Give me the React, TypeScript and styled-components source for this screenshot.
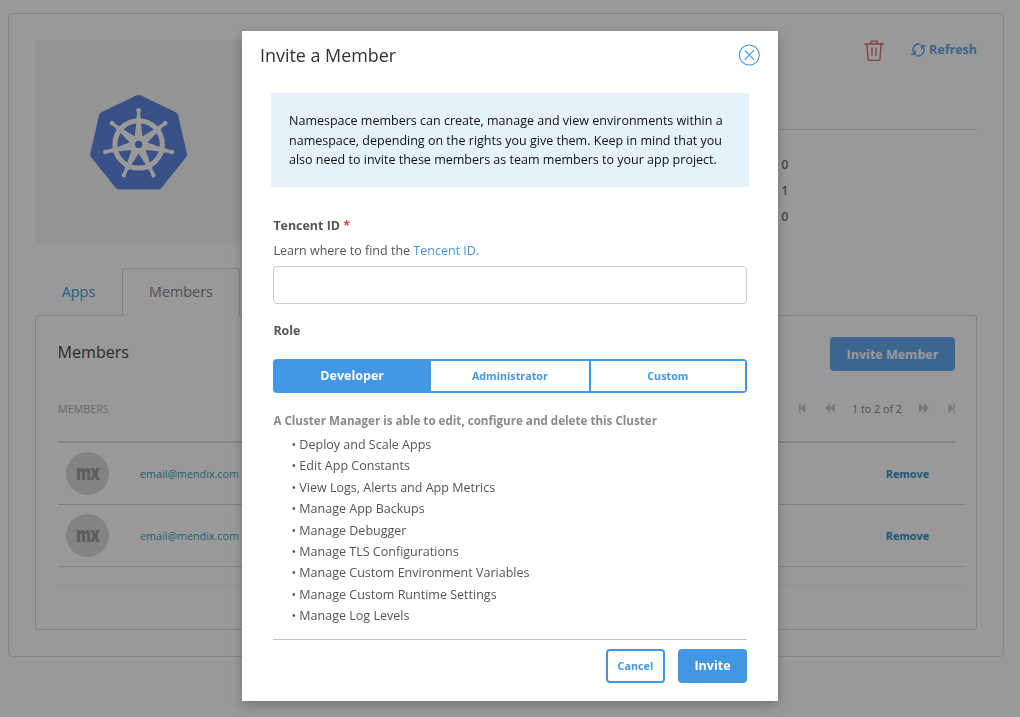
import React from "react";
import styled, { createGlobalStyle } from "styled-components";

const GlobalStyle = createGlobalStyle`
  * { box-sizing: border-box; }
  body {
    margin: 0;
    background: #fff;
    font-family: "Open Sans", "Noto Sans", sans-serif;
    font-size: 12.52px;
    color: #555;
    overflow: hidden;
  }
  button { font-family: inherit; margin: 0; padding: 0; cursor: pointer; }
  p, h1, h2, h3, ul { margin: 0; padding: 0; font-weight: 400; }
`;

const Page = styled.div`
  height: 717px;
  padding: 13px 16px 0 8px;
`;

const ClusterCard = styled.main`
  height: 644px;
  padding: 26px 26px 0 26px;
  border: 1px solid #dedede;
  border-radius: 4px;
`;

const Summary = styled.section`
  display: flex;
  height: 204px;
`;

const LogoTile = styled.div`
  display: flex;
  align-items: center;
  justify-content: center;
  width: 207px;
  background: #f7f7f7;
`;

const Details = styled.div`
  flex: 1;
  margin-left: 24px;
`;

const Actions = styled.div`
  display: flex;
  justify-content: flex-end;
  align-items: flex-start;
  height: 90px;
  border-bottom: 1px solid #d8d8d8;
`;

const TrashButton = styled.button`
  height: 21px;
  margin-right: 27px;
  border: 0;
  background: none;
  color: #e06a6a;
  line-height: 0;
`;

const RefreshButton = styled.button`
  display: flex;
  align-items: center;
  gap: 3px;
  height: 19px;
  border: 0;
  background: none;
  color: #5fa8ee;
  font-size: 12.5px;
  font-weight: 700;
`;

const Stats = styled.div`
  display: flex;
  flex-direction: column;
  align-items: flex-end;
  padding: 22px 188.5px 0 0;
  line-height: 26px;
  font-weight: 600;
  color: #757575;
`;

const Tabs = styled.nav`
  display: flex;
  height: 48px;
  margin-top: 24px;
  position: relative;
`;

const Tab = styled.button<{ $active?: boolean }>`
  width: ${(p) => (p.$active ? 118 : 87)}px;
  padding-bottom: 2px;
  border: 1px solid ${(p) => (p.$active ? "#dadada" : "transparent")};
  border-bottom: 0;
  border-radius: 4px 4px 0 0;
  background: ${(p) => (p.$active ? "#fff" : "none")};
  color: ${(p) => (p.$active ? "#868686" : "#3ba5d6")};
  font-size: 14.35px;
`;

const Panel = styled.section`
  height: 315px;
  margin-top: -1px;
  padding: 21px 11px 0 22px;
  border: 1px solid #dadada;
  border-radius: 3px;
`;

const PanelHead = styled.div`
  display: flex;
  justify-content: space-between;
  padding-right: 10px;
`;

const PanelTitle = styled.h2`
  margin-left: -0.5px;
  line-height: 30px;
  font-size: 16.1px;
  color: #484848;
`;

const InviteMemberButton = styled.button`
  width: 125px;
  height: 34px;
  border: 0;
  border-radius: 4px;
  background: #62abf0;
  color: #fff;
  font-size: 12.5px;
  font-weight: 700;
`;

const TableHead = styled.div`
  display: flex;
  align-items: center;
  justify-content: space-between;
  height: 72px;
  margin-right: 10px;
  padding-top: 5px;
  border-bottom: 2px solid #dcdcdc;
  font-size: 10.75px;
  color: #b0b0b0;
`;

const Pager = styled.div`
  display: flex;
  align-items: center;
  color: #cacaca;
`;

const PagerText = styled.span`
  margin: 1px 17px 0;
  color: #858585;
`;

const Skip = styled.span<{ $before?: number; $after?: number }>`
  margin-left: ${(p) => p.$before ?? 0}px;
  margin-right: ${(p) => p.$after ?? 0}px;
  line-height: 0;
`;

const MemberRow = styled.div`
  display: flex;
  align-items: center;
  height: 62px;
  padding: 0 36px 0 8px;
  border-bottom: 1px solid #d8d8d8;
  font-size: 10.75px;
`;

const Avatar = styled.div`
  display: flex;
  align-items: center;
  justify-content: center;
  width: 43px;
  height: 43px;
  border-radius: 50%;
  background: #dadada;
`;

const AvatarMark = styled.span`
  margin-top: -4px;
  font-size: 21.5px;
  line-height: 23px;
  font-weight: 800;
  letter-spacing: -1px;
  color: #9c9c9c;
  transform: scaleX(0.7);
`;

const Email = styled.a`
  flex: 1;
  margin-left: 31px;
  color: #3ba0cc;
`;

const Remove = styled.a`
  color: #2c93c8;
  font-weight: 700;
`;

const TableFoot = styled.div`
  height: 19px;
  border-bottom: 1px solid #f3f3f3;
`;

const Overlay = styled.div`
  position: fixed;
  inset: 0;
  padding: 31px 242px 0;
  background: rgba(0, 0, 0, 0.4);
`;

const Dialog = styled.div`
  width: 536px;
  height: 669.5px;
  padding: 13px 18px 0;
  background: #fff;
  box-shadow: 0 4px 11px rgba(0, 0, 0, 0.25);
`;

const DialogHead = styled.header`
  display: flex;
  justify-content: space-between;
  align-items: center;
  height: 22px;
`;

const DialogTitle = styled.h1`
  font-size: 17.9px;
  line-height: 22px;
  color: #333;
`;

const CloseButton = styled.button`
  border: 0;
  background: none;
  color: #4297e5;
  line-height: 0;
`;

const Notice = styled.p`
  margin: 27px 11px 0;
  height: 94px;
  padding: 18px 18px 0;
  background: #e4f2fc;
  color: #111;
  line-height: 19.65px;
  white-space: nowrap;
`;

const Form = styled.div`
  width: 473.4px;
  margin-left: 13.4px;
`;

const Label = styled.h3<{ $top: number }>`
  margin-top: ${(p) => p.$top}px;
  height: 20px;
  line-height: 20px;
  font-size: 12.45px;
  font-weight: 700;
  color: #555;
`;

const Required = styled.span`
  color: #e33f3c;
`;

const Hint = styled.p`
  margin-top: 5px;
  line-height: 20px;
  height: 20px;
`;

const Link = styled.a`
  color: #4297e5;
`;

const Input = styled.input`
  display: block;
  width: 100%;
  height: 38px;
  margin-top: 5px;
  border: 1px solid #ccc;
  border-radius: 4px;
  outline: 0;
`;

const RoleSwitch = styled.div`
  display: flex;
  height: 34px;
  margin-top: 18px;
  border: 2px solid #4297e5;
  border-radius: 4px;
`;

const Role = styled.button<{ $active?: boolean; $width: number }>`
  width: ${(p) => p.$width}px;
  padding-right: ${(p) => (p.$active ? 2 : 0)}px;
  padding-bottom: ${(p) => (p.$active ? 1 : 0)}px;
  border: 0;
  border-right: ${(p) => (p.$active ? 0 : 2)}px solid #4297e5;
  background: ${(p) => (p.$active ? "#4297e5" : "#fff")};
  color: ${(p) => (p.$active ? "#fff" : "#4297e5")};
  font-size: ${(p) => (p.$active ? 12.5 : 10.75)}px;
  font-weight: 700;
  &:last-child { border-right: 0; flex: 1; }
`;

const Explanation = styled.p`
  margin-top: 17px;
  height: 22px;
  line-height: 21px;
  font-size: 11.62px;
  font-weight: 700;
  color: #8a8a8a;
`;

const Rights = styled.ul`
  list-style: none;
  padding: 1.8px 0 0 18px;
  height: 207.5px;
  line-height: 21.43px;
  border-bottom: 1px solid #c4c4c4;
`;

const Right = styled.li`
  &::before { content: "• "; }
`;

const Footer = styled.footer`
  display: flex;
  justify-content: flex-end;
  gap: 13.4px;
  margin-top: 9px;
`;

const CancelButton = styled.button`
  width: 59px;
  height: 34px;
  border: 2px solid #4297e5;
  border-radius: 4px;
  background: #fff;
  color: #4297e5;
  font-size: 10.75px;
  font-weight: 700;
`;

const InviteButton = styled.button`
  width: 68.5px;
  height: 34px;
  border: 0;
  border-radius: 4px;
  background: #4297e5;
  color: #fff;
  font-size: 12.5px;
  font-weight: 700;
`;

const spokes = [0, 1, 2, 3, 4, 5, 6].map((i) => (i * 360) / 7);

const heptagon = spokes
  .map((deg) => {
    const a = (deg * Math.PI) / 180;
    return `${(45 * Math.sin(a)).toFixed(2)},${(-45 * Math.cos(a)).toFixed(2)}`;
  })
  .join(" ");

const HelmLogo = () => (
  <svg width="100" height="100" viewBox="-49.6 -52.4 100 100">
    <polygon points={heptagon} fill="#6287e3" stroke="#6287e3" strokeWidth="9" strokeLinejoin="round" />
    <circle r="23.7" fill="none" stroke="#fff" strokeWidth="5" />
    {spokes.map((deg) => (
      <g key={deg} transform={`rotate(${deg})`} fill="#fff">
        <polygon points="-4,-7 -2.2,-22 2.2,-22 4,-7" />
        <path d="M-2.8,-25 L-1.6,-29 L-1.8,-34 L1.8,-34 L1.6,-29 L2.8,-25 Z" />
        <circle cy="-34.2" r="2.2" />
      </g>
    ))}
    <circle r="9.4" fill="#fff" />
    <circle r="3.7" fill="#6287e3" />
  </svg>
);

const TrashIcon = () => (
  <svg width="20" height="21" viewBox="0 0 20 21" fill="none" stroke="currentColor" strokeWidth="1.3" strokeLinecap="round" strokeLinejoin="round">
    <path d="M0.8 4 H19.2 M6.3 4 L6.8 1.8 Q7 1.1 7.8 1.1 H12.2 Q13 1.1 13.2 1.8 L13.7 4" />
    <path d="M2.9 4.2 L4 18.9 Q4.1 20.3 5.4 20.3 H14.6 Q15.9 20.3 16 18.9 L17.1 4.2 M8 8.2 V15.4 M12 8.2 V15.4" />
  </svg>
);

const RefreshIcon = () => (
  <svg width="15" height="14" viewBox="0 0 15 14" fill="none" stroke="currentColor" strokeWidth="1.35" strokeLinecap="round" strokeLinejoin="round">
    <path d="M4 11.2 A5.8 5.8 0 0 1 9.2 1.2 M10.8 2.6 A5.8 5.8 0 0 1 5.6 12.7" />
    <path d="M0.7 11.2 H4.1 V7.9 M14.2 2.6 H10.7 V5.9" />
  </svg>
);

const FirstIcon = ({ flip }: { flip?: boolean }) => (
  <svg width="7" height="11" viewBox="0 0 7 11" fill="currentColor">
    <path transform={flip ? "translate(7 0) scale(-1 1)" : undefined} d="M0.2 0 H1.6 V10.4 H0.2 Z M6.5 0 V10.4 L1.4 5.2 Z" />
  </svg>
);

const StepIcon = ({ flip }: { flip?: boolean }) => (
  <svg width="10" height="11" viewBox="0 0 10 11" fill="currentColor">
    <path transform={flip ? "translate(10 0) scale(-1 1)" : undefined} d="M5.2 0 V9.8 L0 4.9 Z M9.9 0 V9.8 L4.8 4.9 Z" />
  </svg>
);

const CloseIcon = () => (
  <svg width="22" height="22" viewBox="-0.3 0 22 22" fill="none" stroke="currentColor" strokeWidth="1.1" strokeLinecap="round">
    <circle cx="11" cy="11" r="10" />
    <path d="M6.7 6.7 L15.3 15.3 M15.3 6.7 L6.7 15.3" />
  </svg>
);

const members = ["email@mendix.com", "email@mendix.com"];

const rights = [
  "Deploy and Scale Apps",
  "Edit App Constants",
  "View Logs, Alerts and App Metrics",
  "Manage App Backups",
  "Manage Debugger",
  "Manage TLS Configurations",
  "Manage Custom Environment Variables",
  "Manage Custom Runtime Settings",
  "Manage Log Levels",
];

export default function App() {
  return (
    <>
      <GlobalStyle />
      <Page>
        <ClusterCard>
          <Summary>
            <LogoTile><HelmLogo /></LogoTile>
            <Details>
              <Actions>
                <TrashButton aria-label="Delete"><TrashIcon /></TrashButton>
                <RefreshButton><RefreshIcon />Refresh</RefreshButton>
              </Actions>
              <Stats>
                <span>0</span>
                <span>1</span>
                <span>0</span>
              </Stats>
            </Details>
          </Summary>
          <Tabs>
            <Tab>Apps</Tab>
            <Tab $active>Members</Tab>
          </Tabs>
          <Panel>
            <PanelHead>
              <PanelTitle>Members</PanelTitle>
              <InviteMemberButton>Invite Member</InviteMemberButton>
            </PanelHead>
            <TableHead>
              <span>MEMBERS</span>
              <Pager>
                <Skip $after={19}><FirstIcon /></Skip>
                <Skip><StepIcon /></Skip>
                <PagerText>1 to 2 of 2</PagerText>
                <Skip><StepIcon flip /></Skip>
                <Skip $before={19}><FirstIcon flip /></Skip>
              </Pager>
            </TableHead>
            {members.map((email, i) => (
              <MemberRow key={i}>
                <Avatar><AvatarMark>mx</AvatarMark></Avatar>
                <Email>{email}</Email>
                <Remove>Remove</Remove>
              </MemberRow>
            ))}
            <TableFoot />
          </Panel>
        </ClusterCard>
      </Page>
      <Overlay>
        <Dialog role="dialog">
          <DialogHead>
            <DialogTitle>Invite a Member</DialogTitle>
            <CloseButton aria-label="Close"><CloseIcon /></CloseButton>
          </DialogHead>
          <Notice>
            Namespace members can create, manage and view environments within a<br />
            namespace, depending on the rights you give them. Keep in mind that you<br />
            also need to invite these members as team members to your app project.
          </Notice>
          <Form>
            <Label $top={28.5}>Tencent ID <Required>*</Required></Label>
            <Hint>Learn where to find the <Link>Tencent ID.</Link></Hint>
            <Input />
            <Label $top={17.5}>Role</Label>
            <RoleSwitch>
              <Role $active $width={155.5}>Developer</Role>
              <Role $width={160}>Administrator</Role>
              <Role $width={155}>Custom</Role>
            </RoleSwitch>
            <Explanation>A Cluster Manager is able to edit, configure and delete this Cluster</Explanation>
            <Rights>
              {rights.map((r) => <Right key={r}>{r}</Right>)}
            </Rights>
            <Footer>
              <CancelButton>Cancel</CancelButton>
              <InviteButton>Invite</InviteButton>
            </Footer>
          </Form>
        </Dialog>
      </Overlay>
    </>
  );
}
